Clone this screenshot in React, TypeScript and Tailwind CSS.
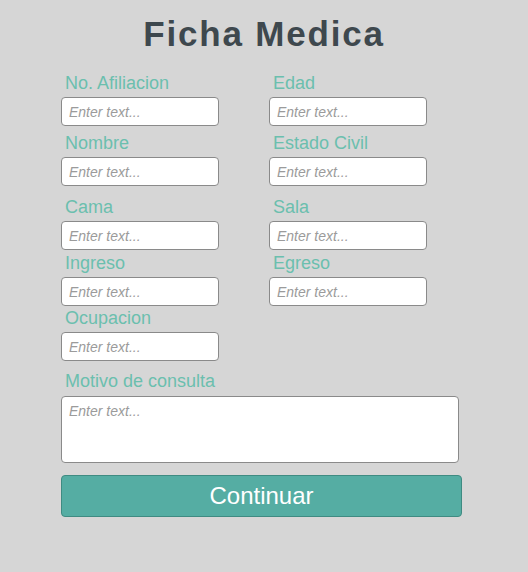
import React from "react";

const font = { fontFamily: '"Liberation Sans", Arial, sans-serif' };

function Field({ label, className = "" }: { label: string; className?: string }) {
  return (
    <div className={"flex flex-col " + className}>
      <label className="pl-1 text-[18px] leading-[20px] text-[#6bbfae]">{label}</label>
      <input
        placeholder="Enter text..."
        className="mt-[4px] h-[29px] w-[158px] rounded-[4px] border border-[#8a8a8a] bg-white px-[7px] text-[14px] italic text-[#555] placeholder:text-[#9b9b9b] placeholder:italic outline-none"
      />
    </div>
  );
}

function Row({ a, b, className = "" }: { a: string; b?: string; className?: string }) {
  return (
    <div className={"flex gap-[50px] " + className}>
      <Field label={a} />
      {b ? <Field label={b} /> : null}
    </div>
  );
}

export default function App() {
  return (
    <div className="min-h-[572px] w-[528px] bg-[#d6d6d6]" style={font}>
      <h1 className="pt-[14px] text-center text-[35px] font-bold leading-[40px] tracking-[1.8px] text-[#3e484e]">
        Ficha Medica
      </h1>
      <div className="pl-[61px]">
        <Row a="No. Afiliacion" b="Edad" className="mt-[19px]" />
        <Row a="Nombre" b="Estado Civil" className="mt-[7px]" />
        <Row a="Cama" b="Sala" className="mt-[11px]" />
        <Row a="Ingreso" b="Egreso" className="mt-[3px]" />
        <Row a="Ocupacion" className="mt-[2px]" />
        <div className="mt-[10px] flex flex-col">
          <label className="pl-1 text-[18px] leading-[20px] text-[#6bbfae]">Motivo de consulta</label>
          <textarea
            placeholder="Enter text..."
            className="mt-[5px] h-[67px] w-[398px] resize-none rounded-[4px] border border-[#8a8a8a] bg-white px-[7px] py-[5px] text-[14px] italic leading-[18px] text-[#555] placeholder:text-[#9b9b9b] outline-none"
          />
        </div>
        <button className="mt-[12px] flex h-[42px] w-[401px] items-center justify-center rounded-[4px] border border-[#3f8b82] bg-[#55ada3] text-[24px] text-white">
          Continuar
        </button>
      </div>
    </div>
  );
}
